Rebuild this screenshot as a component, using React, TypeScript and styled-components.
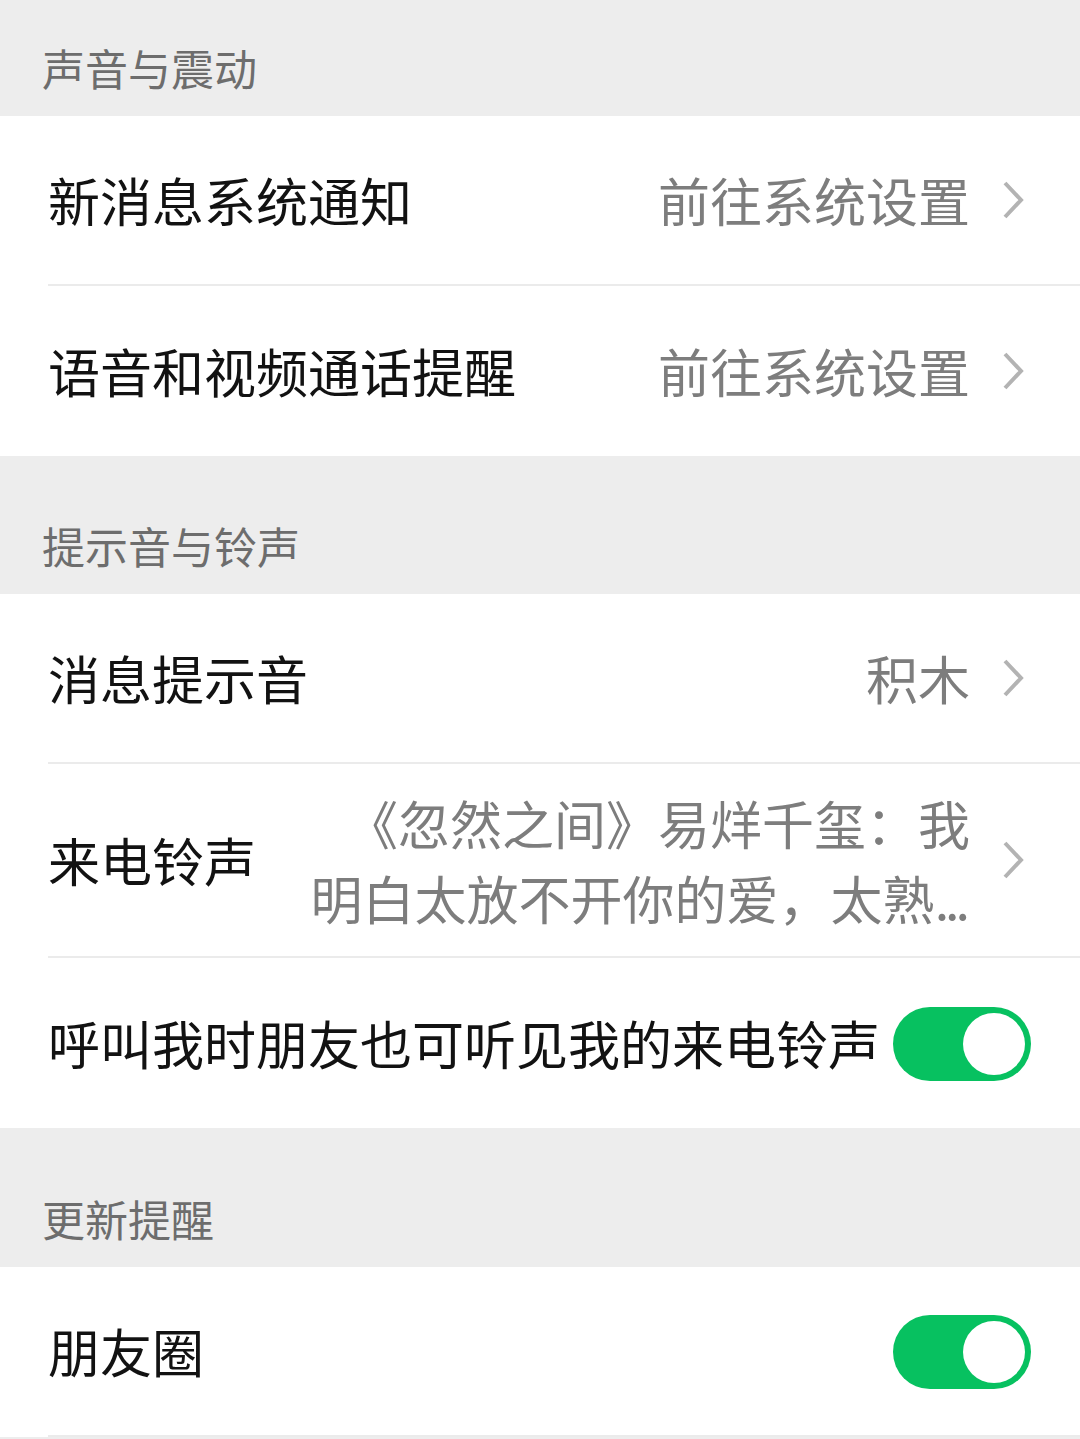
import React from "react";
import styled, { createGlobalStyle } from "styled-components";

const Global = createGlobalStyle`
  html, body { margin: 0; padding: 0; background: #ededed; }
  body { font-family: "Noto Sans CJK SC", "Noto Sans", sans-serif; -webkit-font-smoothing: antialiased; }
  * { box-sizing: border-box; }
`;

const Page = styled.div`
  display: flex;
  flex-direction: column;
  width: 1080px;
`;

const SectionHeader = styled.div<{ $h: number }>`
  height: ${(p) => p.$h}px;
  display: flex;
  align-items: flex-end;
  padding: 0 0 23px 42px;
  background: #ededed;
  color: #6d6d6d;
  font-size: 43px;
  line-height: 52px;
`;

const Group = styled.div`
  display: flex;
  flex-direction: column;
  background: #ffffff;
`;

const Row = styled.div`
  padding-left: 48px;
  display: flex;
`;

const RowBody = styled.div<{ $h: number; $divider?: boolean }>`
  flex: 1;
  min-height: ${(p) => p.$h}px;
  display: flex;
  align-items: center;
  padding-right: 49px;
  border-bottom: ${(p) => (p.$divider ? "2px solid #ebebeb" : "none")};
`;

const Title = styled.div`
  flex: none;
  font-size: 52px;
  line-height: 64px;
  color: #121212;
  white-space: nowrap;
`;

const Spacer = styled.div`
  flex: 1;
`;

const Value = styled.div<{ $multi?: boolean }>`
  flex: none;
  font-size: 52px;
  line-height: ${(p) => (p.$multi ? "75px" : "64px")};
  color: #7d7d7d;
  text-align: right;
  white-space: nowrap;
  display: flex;
  flex-direction: column;
  align-items: flex-end;
`;

const Dots = styled.span`
  letter-spacing: -4px;
  margin-right: 4px;
`;

const Chevron = styled.svg`
  flex: none;
  width: 24px;
  height: 40px;
  margin-left: 31px;
  margin-right: 6px;
`;

const Toggle = styled.div<{ $on: boolean }>`
  flex: none;
  width: 138px;
  height: 74px;
  border-radius: 37px;
  background: ${(p) => (p.$on ? "#07c160" : "#e5e5e5")};
  display: flex;
  align-items: center;
  justify-content: ${(p) => (p.$on ? "flex-end" : "flex-start")};
  padding: 0 6px;
  margin-top: 2px;
`;

const Knob = styled.div`
  width: 62px;
  height: 62px;
  border-radius: 50%;
  background: #ffffff;
`;

const Arrow = () => (
  <Chevron viewBox="0 0 24 40">
    <polyline points="4,3 20,20 4,37" fill="none" stroke="#b3b3b3" strokeWidth="4" />
  </Chevron>
);

export default function App() {
  return (
    <Page>
      <Global />
      <SectionHeader $h={116}>声音与震动</SectionHeader>
      <Group>
        <Row>
          <RowBody $h={170} $divider>
            <Title>新消息系统通知</Title>
            <Spacer />
            <Value>前往系统设置</Value>
            <Arrow />
          </RowBody>
        </Row>
        <Row>
          <RowBody $h={170}>
            <Title>语音和视频通话提醒</Title>
            <Spacer />
            <Value>前往系统设置</Value>
            <Arrow />
          </RowBody>
        </Row>
      </Group>

      <SectionHeader $h={138}>提示音与铃声</SectionHeader>
      <Group>
        <Row>
          <RowBody $h={170} $divider>
            <Title>消息提示音</Title>
            <Spacer />
            <Value>积木</Value>
            <Arrow />
          </RowBody>
        </Row>
        <Row>
          <RowBody $h={194} $divider>
            <Title>来电铃声</Title>
            <Spacer />
            <Value $multi>
              <span>《忽然之间》易烊千玺：我</span>
              <span>
                明白太放不开你的爱，太熟<Dots>...</Dots>
              </span>
            </Value>
            <Arrow />
          </RowBody>
        </Row>
        <Row>
          <RowBody $h={170}>
            <Title>呼叫我时朋友也可听见我的来电铃声</Title>
            <Spacer />
            <Toggle $on>
              <Knob />
            </Toggle>
          </RowBody>
        </Row>
      </Group>

      <SectionHeader $h={139}>更新提醒</SectionHeader>
      <Group>
        <Row>
          <RowBody $h={170} $divider>
            <Title>朋友圈</Title>
            <Spacer />
            <Toggle $on>
              <Knob />
            </Toggle>
          </RowBody>
        </Row>
      </Group>
    </Page>
  );
}
